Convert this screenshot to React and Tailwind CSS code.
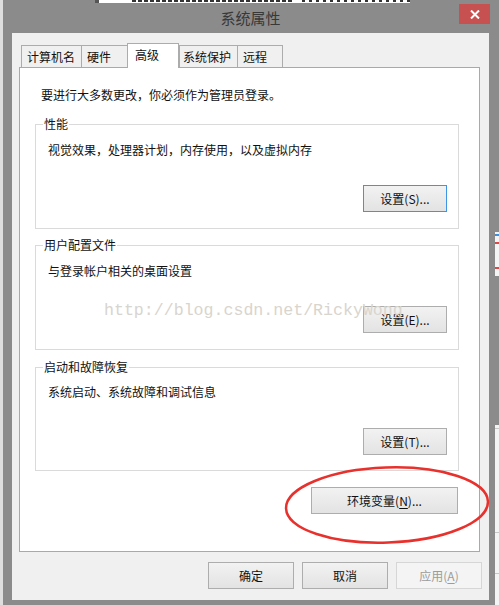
import clsx from 'clsx';

const tabs = [
  { label: '计算机名', width: 'w-[60px]', pad: 'pl-[5px]' },
  { label: '硬件', width: 'w-[46px]', pad: 'pl-[5px]' },
  { label: '高级', width: 'w-[52px]', pad: 'pl-[7px]', active: true },
  { label: '系统保护', width: 'w-[58px]', pad: 'pl-[3px]' },
  { label: '远程', width: 'w-[46px]', pad: 'pl-[5px]', last: true }
];

const groups = [
  {
    title: '性能',
    text: '视觉效果，处理器计划，内存使用，以及虚拟内存',
    button: '设置(S)...',
    focused: true,
    gap: 'mt-[13px]',
    descGap: 'mt-[10px]',
    btnGap: 'mt-[27px]',
    bottom: 'pb-[16px]'
  },
  {
    title: '用户配置文件',
    text: '与登录帐户相关的桌面设置',
    button: '设置(E)...',
    gap: 'mt-[8px]',
    descGap: 'mt-[10px]',
    btnGap: 'mt-[27px]',
    bottom: 'pb-[16px]'
  },
  {
    title: '启动和故障恢复',
    text: '系统启动、系统故障和调试信息',
    button: '设置(T)...',
    gap: 'mt-[9px]',
    descGap: 'mt-[9px]',
    btnGap: 'mt-[28px]',
    bottom: 'pb-[15px]'
  }
];

function Button({ children, focused, disabled, className }) {
  return (
    <div
      className={clsx(
        'flex h-[27px] items-center justify-center border text-[12px] leading-[16px]',
        focused && 'border-[#3d95e5] bg-gradient-to-b from-[#f2f2f2] to-[#e3e3e3] text-[#111]',
        disabled && 'border-[#d6d6d6] bg-[#f4f4f4] text-[#9c9c9c]',
        !focused && !disabled && 'border-[#adadad] bg-gradient-to-b from-[#f2f2f2] to-[#e3e3e3] text-[#111]',
        className
      )}
    >
      {children}
    </div>
  );
}

export default function App() {
  return (
    <div className="relative h-[605px] w-[499px] overflow-hidden bg-[#e4e4e4] font-['Noto_Sans_CJK_SC','Noto_Sans',sans-serif]">
      {/* window */}
      <div className="ml-[3px] w-[496px] bg-[#8b8b8b] pb-[6px] pl-[9px] pr-[10px]">
        <div className="relative flex h-[33px] justify-center pt-[8px]">
          <span className="text-[15px] leading-[20px] text-[#383838]">系统属性</span>
          <div className="absolute right-[-1px] top-[4px] flex h-[20px] w-[31px] items-center justify-center bg-[#c75050]">
            <svg width="10" height="9" viewBox="0 0 10 9">
              <path d="M1 0.5 L9 8.5 M9 0.5 L1 8.5" stroke="#fff" strokeWidth="2" />
            </svg>
          </div>
        </div>

        <div className="h-[567px] bg-[#f0f0f0] pt-[10px]">
          {/* tabs */}
          <div className="relative z-10 ml-[9px] flex h-[24px] items-end">
            {tabs.map((t) =>
              t.active ? (
                <div
                  key={t.label}
                  className={clsx(
                    'mb-[-1px] flex h-[25px] items-center border-x border-t border-[#acacac] bg-white pb-[2px] text-[12px] leading-[16px] text-[#111]',
                    t.width,
                    t.pad
                  )}
                >
                  {t.label}
                </div>
              ) : (
                <div
                  key={t.label}
                  className={clsx(
                    'flex h-[22px] items-center border-l border-t border-[#acacac] bg-[#f0f0f0] pt-px text-[12px] leading-[16px] text-[#111]',
                    t.last && 'border-r',
                    t.width,
                    t.pad
                  )}
                >
                  {t.label}
                </div>
              )
            )}
          </div>

          {/* tab page */}
          <div className="ml-[7px] flex h-[485px] w-[461px] flex-col border border-[#a9a9a9] bg-white pt-[19px] text-[12px] leading-[16px] text-[#111]">
            <p className="pl-[21px]">要进行大多数更改，你必须作为管理员登录。</p>

            {groups.map((g) => (
              <fieldset key={g.title} className={clsx('ml-[15px] w-[424px] border border-[#dadada]', g.gap, g.bottom)}>
                <legend className="ml-[7px] px-px leading-[16px]">{g.title}</legend>
                <p className={clsx('pl-[12px]', g.descGap)}>{g.text}</p>
                <div className={clsx('flex justify-end pr-[11px]', g.btnGap)}>
                  <Button focused={g.focused} className="w-[84px]">
                    {g.button}
                  </Button>
                </div>
              </fieldset>
            ))}

            <div className="mt-[16px] flex justify-end pr-[21px]">
              <Button className="w-[147px]">
                <span>
                  环境变量(<span className="underline underline-offset-2">N</span>)...
                </span>
              </Button>
            </div>
          </div>

          {/* dialog buttons */}
          <div className="mt-[10px] flex justify-end gap-[8px] pr-[7px]">
            <Button className="w-[86px]">确定</Button>
            <Button className="w-[86px]">取消</Button>
            <Button disabled className="w-[86px]">
              <span>
                应用(<span className="underline underline-offset-2">A</span>)
              </span>
            </Button>
          </div>
        </div>
      </div>

      {/* bits of the windows behind */}
      <div className="absolute left-0 top-0 h-[605px] w-[3px] bg-[#dedede]" />
      <div className="absolute left-[95px] top-0 flex h-[3px] w-[315px] bg-white">
        <div className="h-full w-[4px] bg-[#555]" />
        <div className="ml-[33px] h-[2px] w-[160px] bg-[repeating-linear-gradient(90deg,#333_0_4px,#fff_4px_6px)]" />
        <div className="ml-[10px] h-[2px] w-[108px] bg-[repeating-linear-gradient(90deg,#333_0_3px,#fff_3px_7px)]" />
      </div>
      <div className="absolute left-[495px] top-[232px] flex h-[44px] w-[4px] flex-col bg-[#f4f4f4]">
        <div className="mt-[2px] h-[2px] bg-[#3d8fe0]" />
        <div className="mt-[6px] h-[2px] bg-[#e04848]" />
        <div className="mt-[23px] h-[2px] bg-[#e04848]" />
      </div>
      <div className="absolute left-[495px] top-[425px] flex h-[180px] w-[4px] flex-col bg-[#f4f4f4]">
        <div className="mt-[3px] h-px bg-[#c8c8c8]" />
        <div className="mt-[103px] h-px bg-[#c8c8c8]" />
        <div className="mt-[40px] h-px bg-[#c8c8c8]" />
      </div>

      {/* watermark */}
      <div className="pointer-events-none absolute left-[104px] top-[303px] z-20 whitespace-nowrap font-['Liberation_Mono',monospace] text-[16.6px] leading-none text-[#d8d5ce]">
        http://blog.csdn.net/RickyWong
      </div>

      {/* red annotation ellipse */}
      <svg className="pointer-events-none absolute left-[282px] top-[463px] z-20" width="210" height="84" viewBox="0 0 210 84">
        <ellipse cx="105" cy="42" rx="101" ry="37.5" fill="none" stroke="#e8302c" strokeWidth="2.5" transform="rotate(-2 105 42)" />
      </svg>
    </div>
  );
}
